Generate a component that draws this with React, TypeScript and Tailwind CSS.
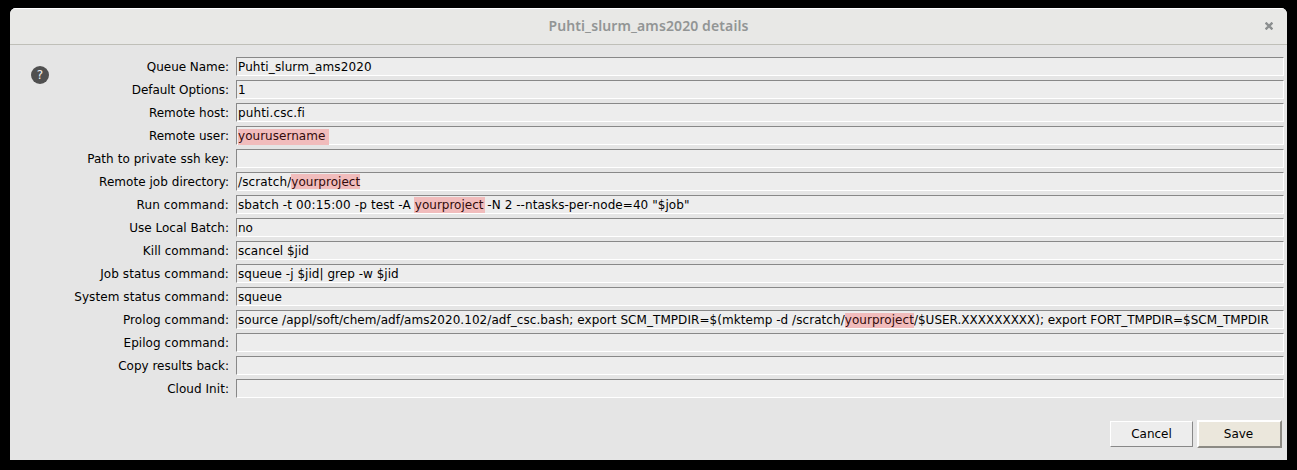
import type { ReactNode } from 'react';

function Mark({ children, box }: { children: ReactNode; box: string }) {
  return (
    <span className="relative text-[#310b0b]">
      <span className={`absolute bg-[#f1bcbc] ${box}`} />
      <span className="relative">{children}</span>
    </span>
  );
}

const rows: { label: string; labelSpacing?: string; value?: ReactNode }[] = [
  { label: 'Queue Name:', labelSpacing: 'tracking-[-0.05px]', value: <span className="tracking-[0.1px]">Puhti_slurm_ams2020</span> },
  { label: 'Default Options:', labelSpacing: 'tracking-[-0.05px]', value: '1' },
  { label: 'Remote host:', value: <span className="tracking-[0.13px]">puhti.csc.fi</span> },
  { label: 'Remote user:', value: <Mark box="left-0 -right-[4px] top-0 h-[16px]"><span className="tracking-[0.03px]">yourusername</span></Mark> },
  { label: 'Path to private ssh key:', labelSpacing: 'tracking-[0.06px]' },
  {
    label: 'Remote job directory:',
    labelSpacing: 'tracking-[0.04px]',
    value: <><span className="tracking-[0.13px]">/scratch/</span><Mark box="left-0 right-0 -top-px h-[15px]"><span className="tracking-[0.02px]">yourproject</span></Mark></>,
  },
  {
    label: 'Run command:',
    labelSpacing: 'tracking-[0.15px]',
    value: (
      <>
        <span className="tracking-[0.12px]">{'sbatch -t 00:15:00 -p test -A '}</span>
        <Mark box="-left-px -right-[2px] -top-px h-[16px]">yourproject</Mark>
        <span className="tracking-[0.06px]">{' -N 2 --ntasks-per-node=40 "$job"'}</span>
      </>
    ),
  },
  { label: 'Use Local Batch:', value: 'no' },
  { label: 'Kill command:', labelSpacing: 'tracking-[0.04px]', value: 'scancel $jid' },
  { label: 'Job status command:', labelSpacing: 'tracking-[0.1px]', value: <span className="tracking-[0.03px]">squeue -j $jid| grep -w $jid</span> },
  { label: 'System status command:', labelSpacing: 'tracking-[0.07px]', value: 'squeue' },
  {
    label: 'Prolog command:',
    labelSpacing: 'tracking-[0.06px]',
    value: (
      <>
        <span className="tracking-[0.057px]">source /appl/soft/chem/adf/ams2020.102/adf_csc.bash; export SCM_TMPDIR=$(mktemp -d /scratch/</span>
        <Mark box="left-0 right-0 top-0 h-[15px]"><span className="tracking-[0.05px]">yourproject</span></Mark>
        <span>/$USER.XXXXXXXXX); </span>
        <span className="tracking-[-0.035px]">export FORT_TMPDIR=$SCM_TMPDIR</span>
      </>
    ),
  },
  { label: 'Epilog command:', labelSpacing: 'tracking-[0.06px]' },
  { label: 'Copy results back:' },
  { label: 'Cloud Init:', labelSpacing: 'tracking-[0.05px]' },
];

export default function App() {
  return (
    <div className="h-[470px] w-[1297px] bg-black px-[10px] pt-2 font-['DejaVu_Sans',sans-serif] text-[12px] text-black">
      <div className="flex h-[452px] flex-col overflow-hidden rounded-t-[6px] bg-[#e5e5e5]">
        <header className="flex h-[37px] shrink-0 items-center border-t border-b border-t-white border-b-[#bfbfb8] bg-[#e8e8e6]">
          <div className="w-9" />
          <h1 className="flex-1 pb-[3px] text-center font-['Noto_Sans',sans-serif] text-[14px] font-semibold tracking-[0.11px] text-[#929595]">
            Puhti_slurm_ams2020 details
          </h1>
          <button className="flex w-9 justify-center pr-px pb-px" aria-label="Close">
            <svg width="8" height="8" viewBox="0 0 8 8" stroke="#8b8e8f" strokeWidth="2.3">
              <path d="M0.6 0.6 7.4 7.4M7.4 0.6 0.6 7.4" />
            </svg>
          </button>
        </header>
        <div className="flex pt-3 pr-[3px]">
          <div className="w-[50px] shrink-0 pt-[9px] pl-[21px]">
            <div className="flex size-[18px] items-center justify-center rounded-full bg-[#505050] text-[12px] leading-none text-[#f0f0f0]">?</div>
          </div>
          <div className="flex flex-1 flex-col gap-1">
            {rows.map(({ label, labelSpacing = '', value }) => (
              <div key={label} className="flex h-[19px]">
                <div className={`w-[169px] shrink-0 text-right leading-[21px] whitespace-nowrap ${labelSpacing}`}>{label}</div>
                <div className="ml-[7px] flex-1 border border-t-[#888] border-r-white border-b-white border-l-[#888] bg-[#ededed] pl-px leading-[19px] whitespace-pre">
                  {value}
                </div>
              </div>
            ))}
          </div>
        </div>
        <footer className="mt-[22px] flex items-center justify-end gap-1 pr-[5px]">
          <button className="h-[26px] w-[83px] border border-t-white border-r-[#888] border-b-[#888] border-l-white bg-[#ededed]">Cancel</button>
          <button className="h-[28px] w-[85px] border-2 border-t-white border-r-[#8c8a84] border-b-[#8c8a84] border-l-white bg-[#ebe7dc] pr-[2px]">Save</button>
        </footer>
      </div>
    </div>
  );
}
